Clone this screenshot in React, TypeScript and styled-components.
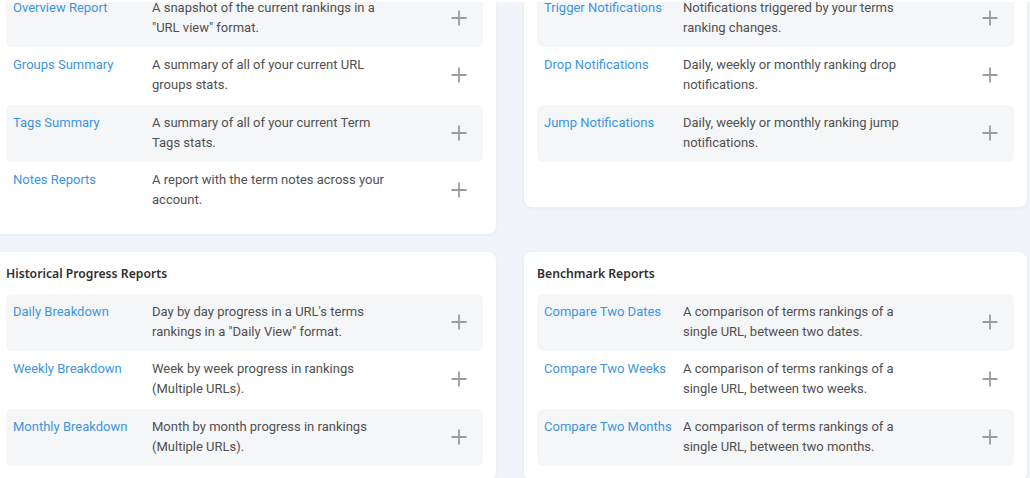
import React from "react";
import styled, { createGlobalStyle } from "styled-components";

const GlobalStyle = createGlobalStyle`
  html, body {
    margin: 0;
    padding: 0;
    background: #f1f4f8;
    font-family: Roboto, "Liberation Sans", Arial, sans-serif;
    overflow: hidden;
  }
`;

const TopEdge = styled.div`
  position: sticky;
  top: 0;
  z-index: 2;
  height: 2px;
  background: #ffffff;
`;

const Page = styled.div`
  display: grid;
  grid-template-columns: 1fr 1fr;
  column-gap: 28px;
  row-gap: 18px;
  align-items: start;
  width: 1034px;
  margin: -54.5px 0 0 -7px;
`;

const Card = styled.section<{ $extraBottom?: number }>`
  background: #ffffff;
  border-radius: 8px;
  padding: 13px 13px ${(p) => 14 + (p.$extraBottom ?? 0)}px 13px;
  box-shadow: 0 1px 4px rgba(40, 60, 90, 0.05);
`;

const CardTitle = styled.h3`
  margin: 0 0 12px 0;
  font-family: "Noto Sans", "Open Sans", sans-serif;
  font-weight: 600;
  font-size: 12.2px;
  line-height: 17px;
  color: #2f2f2f;
`;

const RowList = styled.div`
  display: flex;
  flex-direction: column;
`;

const Row = styled.div<{ $shaded: boolean }>`
  display: grid;
  grid-template-columns: 139px 240px 1fr;
  align-items: start;
  padding: 8px 16px 9.5px 7px;
  border-radius: 6px;
  background: ${(p) => (p.$shaded ? "#f5f6f8" : "transparent")};
`;

const ReportLink = styled.a`
  font-size: 13px;
  line-height: 20px;
  color: #3d95df;
  text-decoration: none;
  cursor: pointer;
  white-space: nowrap;
`;

const Description = styled.div`
  font-size: 13px;
  line-height: 20px;
  color: #505050;
`;

const AddButton = styled.button`
  justify-self: end;
  align-self: center;
  display: flex;
  align-items: center;
  justify-content: center;
  width: 16px;
  height: 16px;
  padding: 0;
  border: none;
  background: none;
  cursor: pointer;
  color: #9c9c9c;
`;

const PlusIcon = () => (
  <svg width="16" height="16" viewBox="0 0 16 16" fill="none">
    <path d="M8 0.5V15.5M0.5 8H15.5" stroke="currentColor" strokeWidth="1.8" />
  </svg>
);

type Report = { title: string; desc: string };

const sections: { title: string; extra?: number; items: Report[] }[] = [
  {
    title: "Snapshot Reports",
    items: [
      { title: "Overview Report", desc: 'A snapshot of the current rankings in a "URL view" format.' },
      { title: "Groups Summary", desc: "A summary of all of your current URL groups stats." },
      { title: "Tags Summary", desc: "A summary of all of your current Term Tags stats." },
      { title: "Notes Reports", desc: "A report with the term notes across your account." },
    ],
  },
  {
    title: "Notifications",
    extra: 31,
    items: [
      { title: "Trigger Notifications", desc: "Notifications triggered by your terms ranking changes." },
      { title: "Drop Notifications", desc: "Daily, weekly or monthly ranking drop notifications." },
      { title: "Jump Notifications", desc: "Daily, weekly or monthly ranking jump notifications." },
    ],
  },
  {
    title: "Historical Progress Reports",
    items: [
      { title: "Daily Breakdown", desc: 'Day by day progress in a URL\'s terms rankings in a "Daily View" format.' },
      { title: "Weekly Breakdown", desc: "Week by week progress in rankings (Multiple URLs)." },
      { title: "Monthly Breakdown", desc: "Month by month progress in rankings (Multiple URLs)." },
    ],
  },
  {
    title: "Benchmark Reports",
    items: [
      { title: "Compare Two Dates", desc: "A comparison of terms rankings of a single URL, between two dates." },
      { title: "Compare Two Weeks", desc: "A comparison of terms rankings of a single URL, between two weeks." },
      { title: "Compare Two Months", desc: "A comparison of terms rankings of a single URL, between two months." },
    ],
  },
];

export default function App() {
  return (
    <>
      <GlobalStyle />
      <TopEdge />
      <Page>
        {sections.map((s) => (
          <Card key={s.title} $extraBottom={s.extra}>
            <CardTitle>{s.title}</CardTitle>
            <RowList>
              {s.items.map((it, i) => (
                <Row key={it.title} $shaded={i % 2 === 0}>
                  <ReportLink>{it.title}</ReportLink>
                  <Description>{it.desc}</Description>
                  <AddButton aria-label={`Add ${it.title}`}>
                    <PlusIcon />
                  </AddButton>
                </Row>
              ))}
            </RowList>
          </Card>
        ))}
      </Page>
    </>
  );
}
